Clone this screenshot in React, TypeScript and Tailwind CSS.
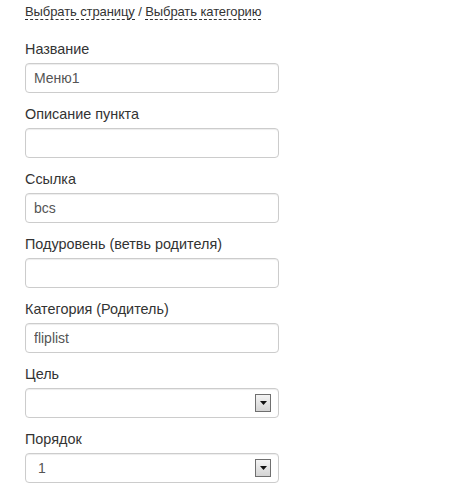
// Menu item edit form

const fields: { label: string; value: string; kind: 'input' | 'select' }[] = [
  { label: 'Название', value: 'Меню1', kind: 'input' },
  { label: 'Описание пункта', value: '', kind: 'input' },
  { label: 'Ссылка', value: 'bcs', kind: 'input' },
  { label: 'Подуровень (ветвь родителя)', value: '', kind: 'input' },
  { label: 'Категория (Родитель)', value: 'fliplist', kind: 'input' },
  { label: 'Цель', value: '', kind: 'select' },
  { label: 'Порядок', value: '1', kind: 'select' },
]

function ArrowBox() {
  return (
    <div className="w-[16px] h-[18px] border border-[#6f6f6f] bg-gradient-to-b from-[#f4f4f4] to-[#d4d4d4] flex items-center justify-center">
      <svg width="7" height="4" viewBox="0 0 7 4">
        <polygon points="0,0 7,0 3.5,4" fill="#111" />
      </svg>
    </div>
  )
}

export default function App() {
  return (
    <div className="min-h-screen bg-white pl-[25px] pt-[2px] font-['Liberation_Sans',Arial,sans-serif] text-[#333]">
      {/* top links */}
      <div className="h-[20px] leading-[20px] text-[13px] tracking-[-0.1px]">
        <span className="border-b border-dashed border-[#333]">Выбрать страницу</span>
        <span> / </span>
        <span className="border-b border-dashed border-[#333]">Выбрать категорию</span>
      </div>

      <div className="mt-[17px] w-[254px]">
        {fields.map((f) => (
          <div key={f.label} className="mb-[11px]">
            <div className="text-[14.4px] leading-[20px]">{f.label}</div>
            {f.kind === 'input' ? (
              <input
                readOnly
                value={f.value}
                className="mt-[4px] block w-full h-[30px] px-[8px] text-[14px] text-[#555] bg-white border border-[#ccc] rounded-[4px] shadow-[inset_0_1px_1px_rgba(0,0,0,0.075)] outline-none"
              />
            ) : (
              <div className="mt-[4px] flex items-center justify-between w-full h-[30px] pl-[12px] pr-[7px] text-[14px] text-[#555] bg-white border border-[#ccc] rounded-[4px] shadow-[inset_0_1px_1px_rgba(0,0,0,0.075)]">
                <span>{f.value}</span>
                <ArrowBox />
              </div>
            )}
          </div>
        ))}
      </div>
    </div>
  )
}
